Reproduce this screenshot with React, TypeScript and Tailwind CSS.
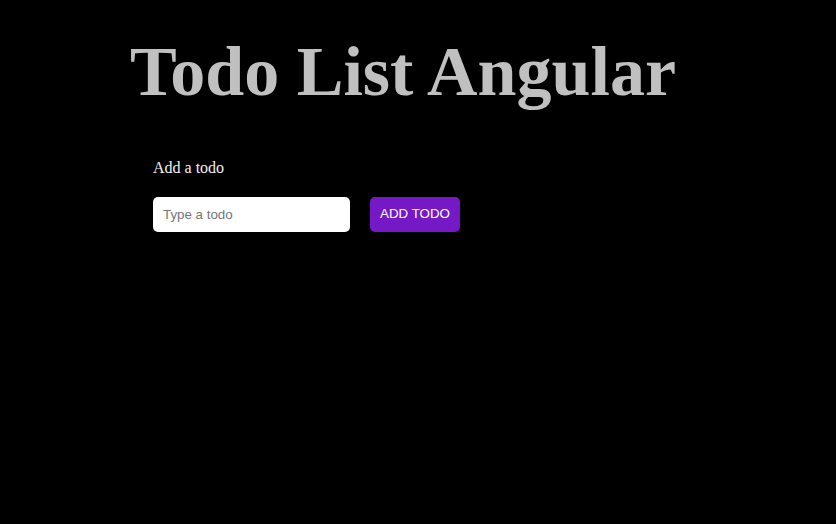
export default function App() {
  return (
    <div className="min-h-screen bg-black">
      <h1 className="pt-[32px] pr-[30px] text-center font-['Liberation_Serif',serif] text-[70px] font-bold leading-[1.15] text-[#c0c0c0]">
        Todo List Angular
      </h1>
      <div className="pl-[153px] pt-[43px]">
        <div className="font-['Liberation_Serif',serif] text-base text-[#f2f2f2]">
          Add a todo
        </div>
        <div className="mt-[17px] flex items-center gap-5">
          <input
            type="text"
            placeholder="Type a todo"
            className="h-[35px] w-[197px] rounded-[5px] bg-white px-[10px] font-['Liberation_Sans',sans-serif] text-[13.33px] text-black outline-none placeholder:text-[#757575]"
          />
          <button className="h-[35px] w-[90px] rounded-[5px] bg-[#7519c6] font-['Liberation_Sans',sans-serif] text-[13.33px] text-white">
            ADD TODO
          </button>
        </div>
      </div>
    </div>
  );
}
